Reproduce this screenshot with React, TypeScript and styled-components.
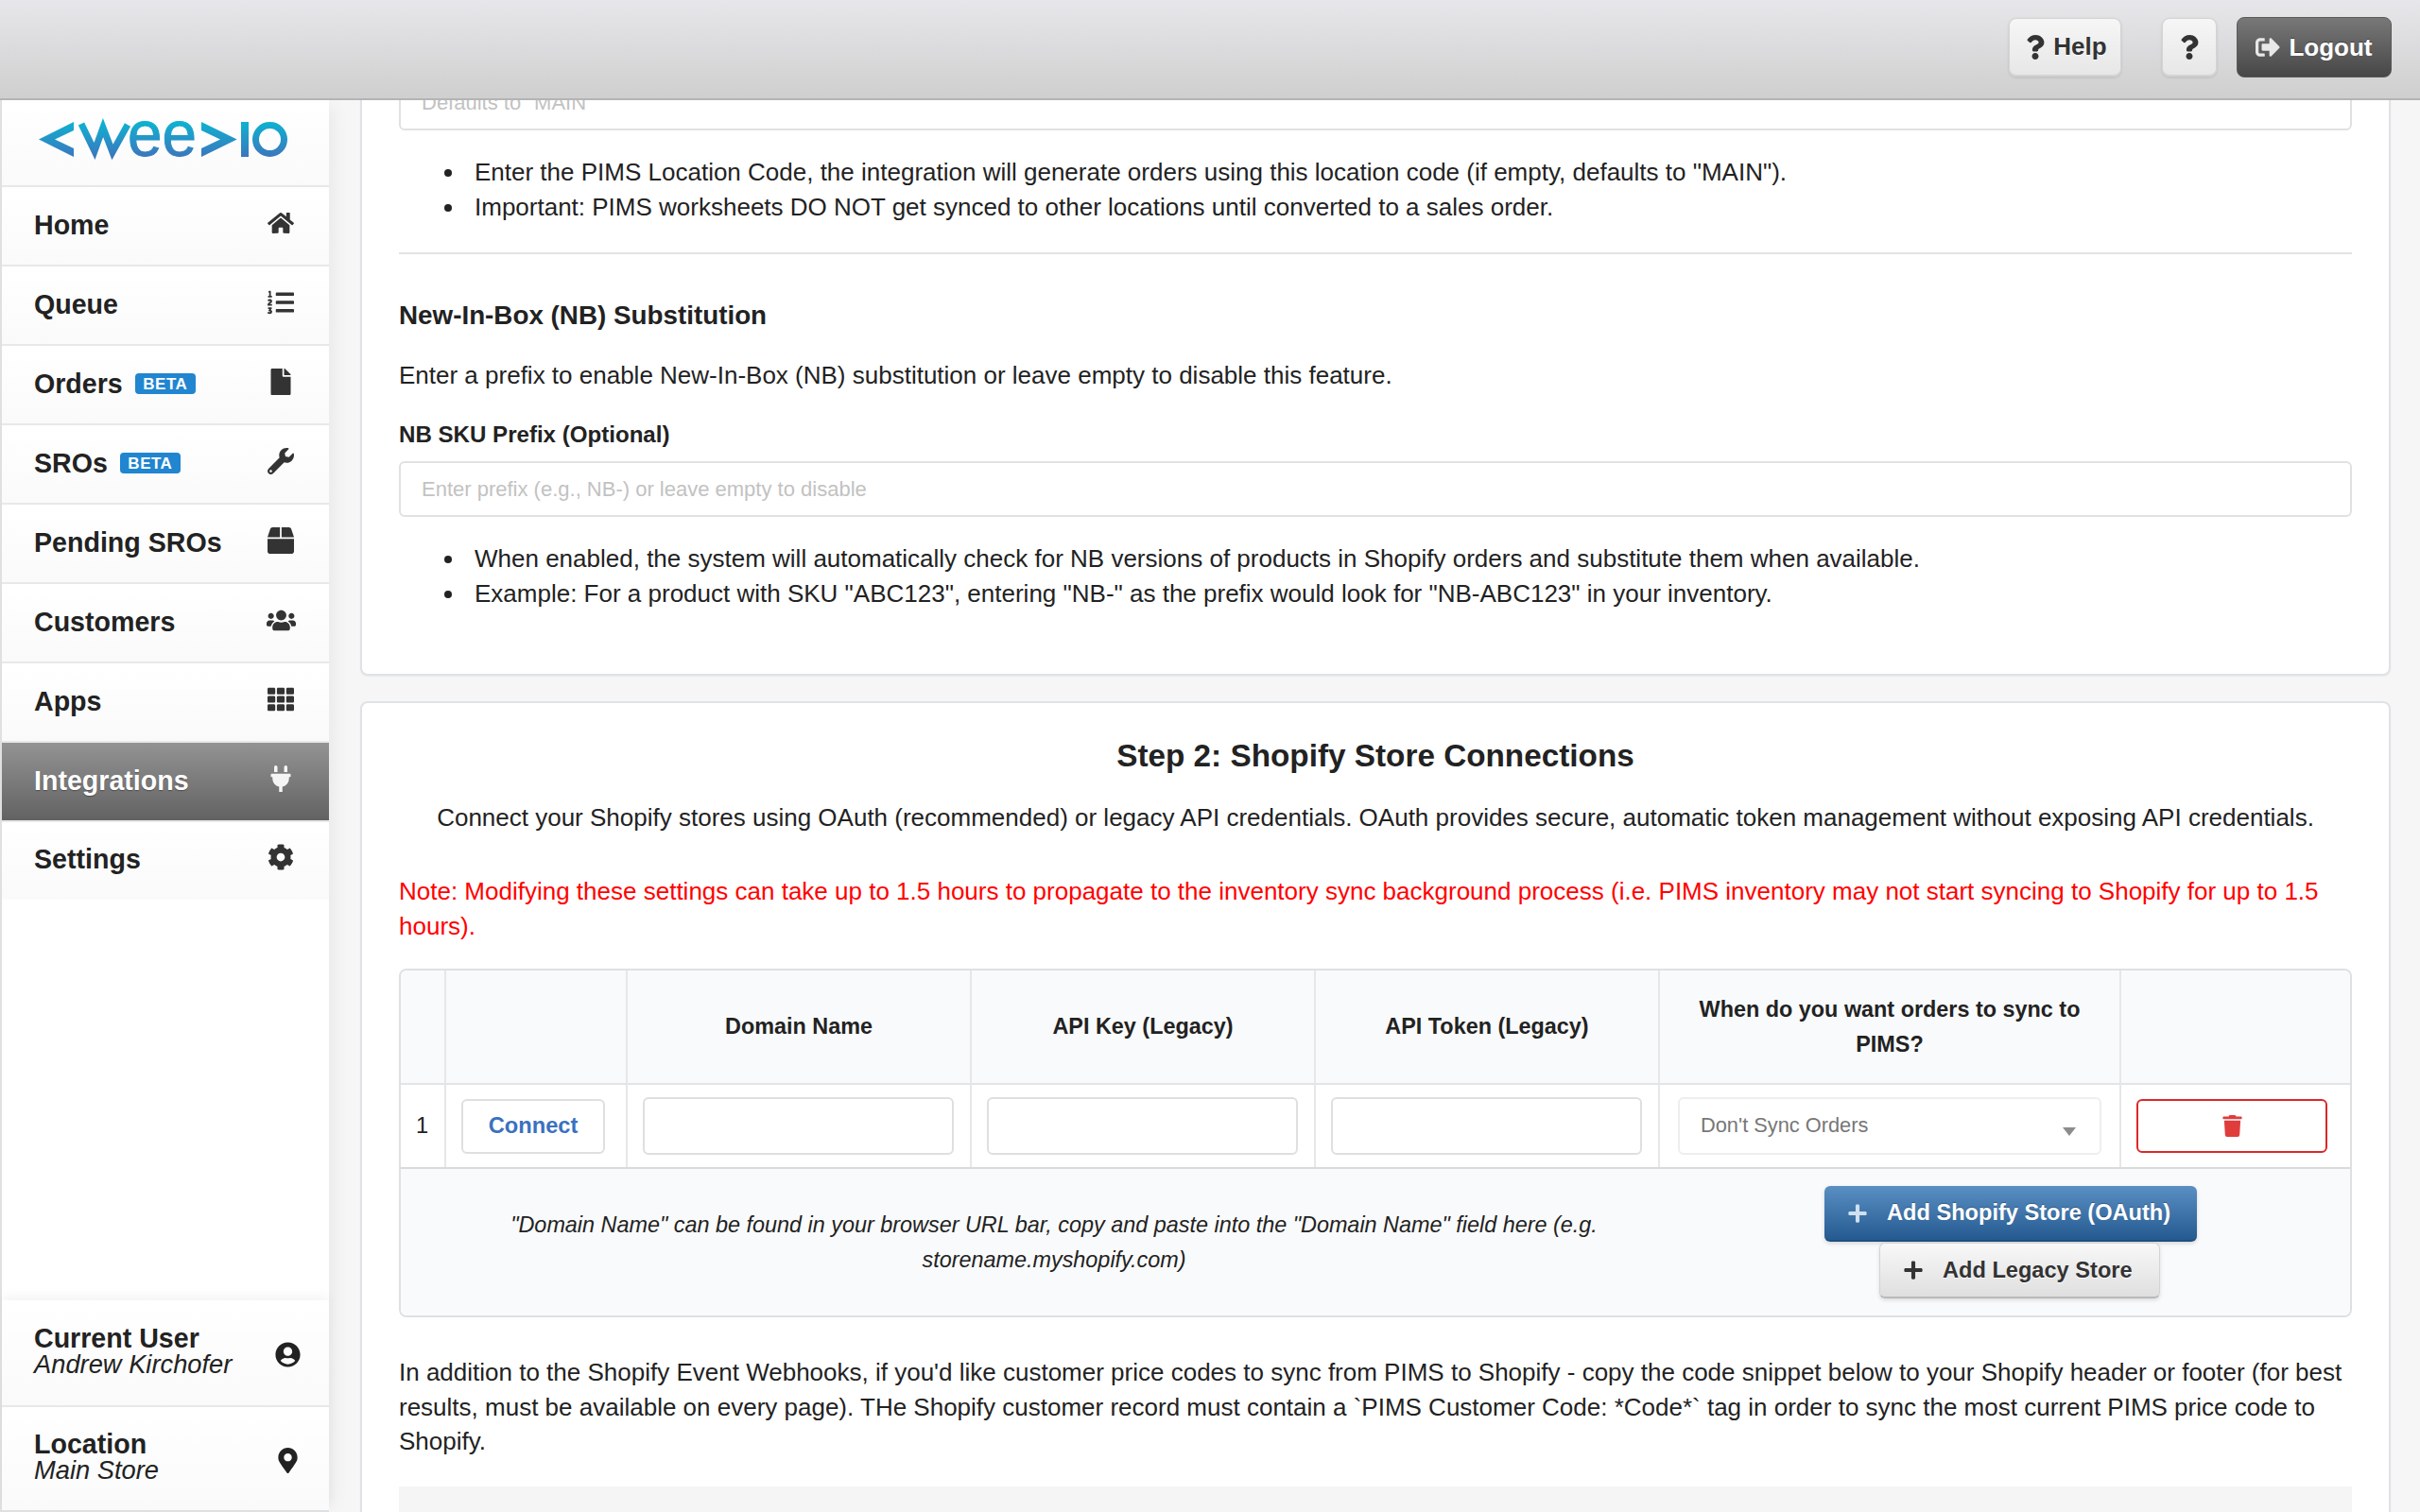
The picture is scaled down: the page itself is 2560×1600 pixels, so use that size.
import { FC, ReactNode } from "react";
import styled, { createGlobalStyle } from "styled-components";
import {
  FaBox,
  FaCog,
  FaFile,
  FaHome,
  FaListOl,
  FaMapMarkerAlt,
  FaPlug,
  FaPlus,
  FaQuestion,
  FaSignOutAlt,
  FaTh,
  FaTrash,
  FaUserCircle,
  FaUsers,
  FaWrench,
} from "react-icons/fa";

interface iNavItem {
  label: string;
  icon: ReactNode;
  iconSize?: number;
  beta?: boolean;
  active?: boolean;
}

const navItems: iNavItem[] = [
  { label: "Home", icon: <FaHome /> },
  { label: "Queue", icon: <FaListOl /> },
  { label: "Orders", icon: <FaFile />, beta: true },
  { label: "SROs", icon: <FaWrench />, beta: true },
  { label: "Pending SROs", icon: <FaBox /> },
  { label: "Customers", icon: <FaUsers />, iconSize: 31 },
  { label: "Apps", icon: <FaTh /> },
  { label: "Integrations", icon: <FaPlug />, active: true },
  { label: "Settings", icon: <FaCog /> },
];

const App: FC = () => {
  return (
    <Page>
      <GlobalStyle />
      <Header>
        <LightButton>
          <FaQuestion />
          Help
        </LightButton>
        <LightButton $square>
          <FaQuestion />
        </LightButton>
        <DarkButton>
          <FaSignOutAlt />
          Logout
        </DarkButton>
      </Header>

      <Body>
        <Sidebar>
          <LogoBox>
            <svg width="264" height="40" viewBox="0 0 264 40" role="img" aria-label="weeio">
              <defs>
                <linearGradient id="logo" gradientUnits="userSpaceOnUse" x1="0" y1="0" x2="0" y2="38">
                  <stop offset="0" stopColor="#0db4d2" />
                  <stop offset="1" stopColor="#3b76bd" />
                </linearGradient>
              </defs>
              <polygon fill="url(#logo)" points="1,19.5 38,1 38,10 18,19.5 38,29 38,38" />
              <polyline
                fill="none"
                stroke="url(#logo)"
                strokeWidth="7"
                points="46,3 60,32 69,7 79,33 95,4"
              />
              <LogoText x="95" y="37" textLength="73" lengthAdjust="spacingAndGlyphs">
                ee
              </LogoText>
              <polygon fill="url(#logo)" points="210.7,19.5 173,1 173,10 193,19.5 173,29 173,38" />
              <rect x="215" y="1" width="8" height="37" fill="url(#logo)" />
              <circle cx="245.5" cy="19.5" r="15" fill="none" stroke="url(#logo)" strokeWidth="7" />
            </svg>
          </LogoBox>

          <nav>
            {navItems.map((item, i) => (
              <NavRow key={item.label} $active={item.active} $last={i === navItems.length - 1}>
                <NavLabel>
                  {item.label}
                  {item.beta && <Beta>BETA</Beta>}
                </NavLabel>
                <NavIcon $size={item.iconSize}>{item.icon}</NavIcon>
              </NavRow>
            ))}
          </nav>

          <SideFooter>
            <InfoRow>
              <div>
                <InfoTitle>Current User</InfoTitle>
                <InfoValue>Andrew Kirchofer</InfoValue>
              </div>
              <InfoIcon>
                <FaUserCircle />
              </InfoIcon>
            </InfoRow>
            <InfoRow>
              <div>
                <InfoTitle>Location</InfoTitle>
                <InfoValue>Main Store</InfoValue>
              </div>
              <InfoIcon>
                <FaMapMarkerAlt />
              </InfoIcon>
            </InfoRow>
          </SideFooter>
        </Sidebar>

        <Main>
          <TopCard>
            <TextInput placeholder={'Defaults to "MAIN"'} />
            <Bullets>
              <li>
                Enter the PIMS Location Code, the integration will generate orders using this
                location code (if empty, defaults to "MAIN").
              </li>
              <li>
                Important: PIMS worksheets DO NOT get synced to other locations until converted to a
                sales order.
              </li>
            </Bullets>
            <Rule />
            <SectionTitle>New-In-Box (NB) Substitution</SectionTitle>
            <Intro>Enter a prefix to enable New-In-Box (NB) substitution or leave empty to disable this feature.</Intro>
            <FieldLabel>NB SKU Prefix (Optional)</FieldLabel>
            <TextInput $tall placeholder="Enter prefix (e.g., NB-) or leave empty to disable" />
            <Bullets>
              <li>
                When enabled, the system will automatically check for NB versions of products in
                Shopify orders and substitute them when available.
              </li>
              <li>
                Example: For a product with SKU "ABC123", entering "NB-" as the prefix would look for
                "NB-ABC123" in your inventory.
              </li>
            </Bullets>
          </TopCard>

          <StepCard>
            <StepTitle>Step 2: Shopify Store Connections</StepTitle>
            <StepIntro>
              Connect your Shopify stores using OAuth (recommended) or legacy API credentials. OAuth
              provides secure, automatic token management without exposing API credentials.
            </StepIntro>
            <Note>
              Note: Modifying these settings can take up to 1.5 hours to propagate to the inventory
              sync background process (i.e. PIMS inventory may not start syncing to Shopify for up to
              1.5 hours).
            </Note>

            <Stores>
              <thead>
                <tr>
                  <Th $w={48} />
                  <Th $w={192} />
                  <Th $w={364}>Domain Name</Th>
                  <Th $w={364}>API Key (Legacy)</Th>
                  <Th $w={364}>API Token (Legacy)</Th>
                  <Th $w={488}>When do you want orders to sync to PIMS?</Th>
                  <Th $w={242} />
                </tr>
              </thead>
              <tbody>
                <tr>
                  <Td>1</Td>
                  <Td>
                    <ConnectButton>Connect</ConnectButton>
                  </Td>
                  <Td>
                    <CellInput />
                  </Td>
                  <Td>
                    <CellInput />
                  </Td>
                  <Td>
                    <CellInput />
                  </Td>
                  <Td>
                    <FakeSelect>
                      Don't Sync Orders
                      <Caret />
                    </FakeSelect>
                  </Td>
                  <Td>
                    <DeleteButton>
                      <FaTrash />
                    </DeleteButton>
                  </Td>
                </tr>
              </tbody>
              <tfoot>
                <tr>
                  <FootCell colSpan={7}>
                    <FootRow>
                      <FootText>
                        "Domain Name" can be found in your browser URL bar, copy and paste into the
                        "Domain Name" field here (e.g. storename.myshopify.com)
                      </FootText>
                      <FootActions>
                        <BlueButton>
                          <FaPlus />
                          Add Shopify Store (OAuth)
                        </BlueButton>
                        <GreyButton>
                          <FaPlus />
                          Add Legacy Store
                        </GreyButton>
                      </FootActions>
                    </FootRow>
                  </FootCell>
                </tr>
              </tfoot>
            </Stores>

            <Closing>
              In addition to the Shopify Event Webhooks, if you'd like customer price codes to sync
              from PIMS to Shopify - copy the code snippet below to your Shopify header or footer (for
              best results, must be available on every page). THe Shopify customer record must contain
              a `PIMS Customer Code: *Code*` tag in order to sync the most current PIMS price code to
              Shopify.
            </Closing>
            <CodeBlock />
          </StepCard>
        </Main>
      </Body>
    </Page>
  );
};

export default App;

const GlobalStyle = createGlobalStyle`
  html, body {
    margin: 0;
    padding: 0;
    height: 100%;
    overflow: hidden;
  }

  * {
    box-sizing: border-box;
  }

  body {
    font-family: "Liberation Sans", Arial, sans-serif;
    font-size: 26px;
    line-height: 36.57px;
    color: #222222;
    background: #f6f6f7;
  }
`;

const Page = styled.div`
  height: 100vh;
  display: flex;
  flex-direction: column;
  overflow: hidden;
`;

const Header = styled.header`
  height: 106px;
  flex-shrink: 0;
  display: flex;
  align-items: center;
  justify-content: flex-end;
  padding: 0 30px 4px 0;
  background: linear-gradient(#e7e6ea, #cfcfcf);
  border-bottom: 2px solid #b4b4b4;
  position: relative;
  z-index: 2;
`;

const LightButton = styled.div<{ $square?: boolean }>`
  width: ${(p) => (p.$square ? "58px" : "119px")};
  height: 62px;
  margin-right: ${(p) => (p.$square ? "21px" : "43px")};
  display: flex;
  align-items: center;
  justify-content: center;
  gap: 6px;
  font-weight: 700;
  color: #333333;
  text-shadow: 0 1px 0 #ffffff;
  background: linear-gradient(#f6f6f6, #e7e7e7);
  border: 1px solid #d4d4d4;
  border-bottom-width: 2px;
  border-radius: 8px;
  box-shadow: 0 1px 3px rgba(0, 0, 0, 0.12);

  svg {
    font-size: 26px;
  }
`;

const DarkButton = styled.div`
  width: 164px;
  height: 64px;
  display: flex;
  align-items: center;
  justify-content: center;
  gap: 9px;
  font-weight: 700;
  color: #ffffff;
  text-shadow: 0 -1px 0 rgba(0, 0, 0, 0.4);
  background: linear-gradient(#787878, #474747);
  border: 1px solid #5a5a5a;
  border-radius: 8px;

  svg {
    font-size: 26px;
    color: #e8e8e8;
  }
`;

const Body = styled.div`
  flex: 1;
  min-height: 0;
  display: flex;
`;

const Sidebar = styled.aside`
  width: 348px;
  flex-shrink: 0;
  display: flex;
  flex-direction: column;
  background: #ffffff;
  border-left: 2px solid #dfe0e2;
  border-bottom: 2px solid #dfe0e2;
  box-shadow: 12px 0 16px -6px rgba(0, 0, 0, 0.05);
  position: relative;
`;

const LogoBox = styled.div`
  height: 92px;
  padding: 22px 0 0 38px;
  background: linear-gradient(#ffffff, #fafafa);
  border-bottom: 2px solid #e8e8e8;

  svg {
    display: block;
    overflow: visible;
  }
`;

const LogoText = styled.text`
  font-family: "Liberation Sans", Arial, sans-serif;
  font-size: 68px;
  fill: url(#logo);
  stroke: url(#logo);
  stroke-width: 1px;
`;

const NavRow = styled.div<{ $active?: boolean; $last?: boolean }>`
  height: ${(p) => (p.$last ? "82px" : "84px")};
  display: flex;
  align-items: center;
  justify-content: space-between;
  padding: 0 33px ${(p) => (p.$last ? "4px" : "2px")} 34px;
  font-size: 28.6px;
  font-weight: 700;
  color: ${(p) => (p.$active ? "#ffffff" : "#222222")};
  text-shadow: ${(p) => (p.$active ? "0 1px 1px rgba(0, 0, 0, 0.35)" : "none")};
  background: ${(p) =>
    p.$active ? "linear-gradient(#939393, #626262)" : "linear-gradient(#ffffff, #fafafa)"};
  border-bottom: ${(p) => (p.$last ? "none" : "2px solid #e8e8e8")};
`;

const NavLabel = styled.div`
  display: flex;
  align-items: center;
`;

const Beta = styled.span`
  margin-left: 13px;
  width: 64px;
  height: 22px;
  display: flex;
  align-items: center;
  justify-content: center;
  font-size: 17px;
  line-height: 1;
  letter-spacing: 0.5px;
  color: #ffffff;
  background: #2185d0;
  border-radius: 4px;
`;

const NavIcon = styled.span<{ $size?: number }>`
  width: 36px;
  display: flex;
  justify-content: center;
  font-size: ${(p) => p.$size || 28}px;
  line-height: 1;
  margin-top: -4px;
  opacity: 0.92;
`;

const SideFooter = styled.div`
  margin-top: auto;
  box-shadow: 0 -6px 10px rgba(0, 0, 0, 0.04);
`;

const InfoRow = styled.div`
  height: 111px;
  display: flex;
  align-items: center;
  justify-content: space-between;
  padding: 0 29px 3px 34px;
  background: linear-gradient(#ffffff, #fafafa);

  & + & {
    border-top: 2px solid #e8e8e8;
  }
`;

const InfoTitle = styled.div`
  font-size: 28.6px;
  line-height: 28px;
  font-weight: 700;
`;

const InfoValue = styled.div`
  font-size: 27.3px;
  line-height: 28px;
  font-style: italic;
`;

const InfoIcon = styled.span`
  width: 30px;
  display: flex;
  justify-content: center;
  font-size: 27px;
  line-height: 1;
  margin-top: 6px;
`;

const Main = styled.main`
  flex: 1;
  min-width: 0;
  overflow: hidden;
  padding: 0 31px 0 33px;
`;

const Card = styled.section`
  background: #ffffff;
  border: 2px solid #dfe2e6;
  border-radius: 8px;
  padding: 36px 39px 40px;
  box-shadow: 0 1px 2px rgba(0, 0, 0, 0.05);
`;

const TopCard = styled(Card)`
  margin-top: -74px;
  padding-top: 46px;
  padding-bottom: 67px;
`;

const StepCard = styled(Card)`
  margin-top: 27px;
`;

const TextInput = styled.input<{ $tall?: boolean }>`
  display: block;
  width: 100%;
  height: ${(p) => (p.$tall ? "59px" : "58px")};
  padding: 0 22px;
  font: inherit;
  font-size: 22px;
  background: #ffffff;
  border: 2px solid #e0e1e2;
  border-radius: 6px;
  outline: none;

  &::placeholder {
    color: #c2c2c2;
    opacity: 1;
  }
`;

const Bullets = styled.ul`
  margin: 26px 0 0;
  padding-left: 71px;

  li {
    padding-left: 9px;
  }
`;

const Rule = styled.hr`
  margin: 30px 0 0;
  border: 0;
  border-top: 2px solid #e3e3e3;
`;

const SectionTitle = styled.h3`
  margin: 47px 0 0;
  font-size: 27.8px;
  line-height: 36px;
  font-weight: 700;
`;

const Intro = styled.p`
  margin: 27px 0 0;
`;

const FieldLabel = styled.label`
  display: block;
  margin: 26px 0 10px;
  font-size: 24.1px;
  font-weight: 700;
`;

const StepTitle = styled.h2`
  margin: 0;
  font-size: 33.3px;
  line-height: 40px;
  font-weight: 700;
  text-align: center;
`;

const StepIntro = styled.p`
  margin: 27px 0 0;
  text-align: center;
`;

const Note = styled.p`
  margin: 41px 0 0;
  color: #ff0000;
`;

const Stores = styled.table`
  width: 100%;
  margin-top: 27px;
  table-layout: fixed;
  border-spacing: 0;
  border: 2px solid #dfe0e2;
  border-radius: 8px;
  overflow: hidden;
`;

const Th = styled.th<{ $w: number }>`
  width: ${(p) => p.$w}px;
  height: 121px;
  padding: 0;
  font-size: 23.4px;
  line-height: 36.57px;
  background: #f9fafb;
  border-bottom: 2px solid #e3e4e6;
  border-right: 2px solid #e6e7e8;

  &:not(:empty) {
    padding: 0 24px;
  }

  &:last-child {
    border-right: 0;
  }
`;

const Td = styled.td`
  height: 87px;
  padding: 0 0 0 16px;
  font-size: 23.7px;
  vertical-align: middle;
  border-right: 2px solid #e6e7e8;

  &:last-child {
    border-right: 0;
  }
`;

const ConnectButton = styled.div`
  width: 152px;
  height: 58px;
  display: flex;
  align-items: center;
  justify-content: center;
  font-weight: 700;
  color: #3a71bf;
  background: #ffffff;
  border: 2px solid #dedfe0;
  border-radius: 6px;
`;

const CellInput = styled.input`
  display: block;
  width: 329px;
  height: 61px;
  background: #ffffff;
  border: 2px solid #dedfe0;
  border-radius: 6px;
  outline: none;
`;

const FakeSelect = styled.div`
  width: 448px;
  height: 61px;
  margin-left: 3px;
  padding: 0 22px;
  display: flex;
  align-items: center;
  justify-content: space-between;
  color: #777777;
  font-size: 21.8px;
  background: #ffffff;
  border: 2px solid #eeeeef;
  border-radius: 6px;
`;

const Caret = styled.span`
  width: 0;
  height: 0;
  margin: 12px 3px 0 0;
  border-left: 7px solid transparent;
  border-right: 7px solid transparent;
  border-top: 9px solid #8c8c8c;
`;

const DeleteButton = styled.div`
  width: 202px;
  height: 57px;
  display: flex;
  align-items: center;
  justify-content: center;
  font-size: 23px;
  color: #e03c3c;
  background: #ffffff;
  border: 2px solid #db2828;
  border-radius: 6px;
`;

const FootCell = styled.td`
  height: 157px;
  padding: 0;
  background: #f9fafb;
  border-top: 2px solid #d9dadc;
`;

const FootRow = styled.div`
  display: flex;
  align-items: center;
`;

const FootText = styled.div`
  width: 1382px;
  padding: 0 20px;
  font-size: 23.4px;
  font-style: italic;
  text-align: center;
`;

const FootActions = styled.div`
  flex: 1;
  display: flex;
  flex-direction: column;
  padding-left: 124px;
`;

const ActionButton = styled.div`
  height: 59px;
  display: flex;
  align-items: center;
  gap: 20px;
  padding-left: 24px;
  font-size: 23.6px;
  font-weight: 700;
  border-radius: 6px;

  svg {
    font-size: 22px;
    flex-shrink: 0;
  }
`;

const BlueButton = styled(ActionButton)`
  width: 394px;
  color: #ffffff;
  text-shadow: 0 -1px 0 rgba(0, 0, 0, 0.3);
  background: linear-gradient(#5a8fc4, #255a90);
  border-bottom: 2px solid #1f4f82;
  box-shadow: 0 2px 4px rgba(0, 0, 0, 0.15);

  svg {
    color: #cfe0f0;
  }
`;

const GreyButton = styled(ActionButton)`
  width: 297px;
  margin: 1px 0 0 58px;
  color: #333333;
  text-shadow: 0 1px 0 #ffffff;
  background: linear-gradient(#f8f8f8, #dfdfdf);
  border: 1px solid #d4d4d4;
  border-bottom: 2px solid #b9b9b9;
  box-shadow: 0 2px 4px rgba(0, 0, 0, 0.12);
`;

const Closing = styled.p`
  margin: 40px 0 0;
`;

const CodeBlock = styled.div`
  height: 240px;
  margin-top: 29px;
  background: #f5f5f5;
`;
